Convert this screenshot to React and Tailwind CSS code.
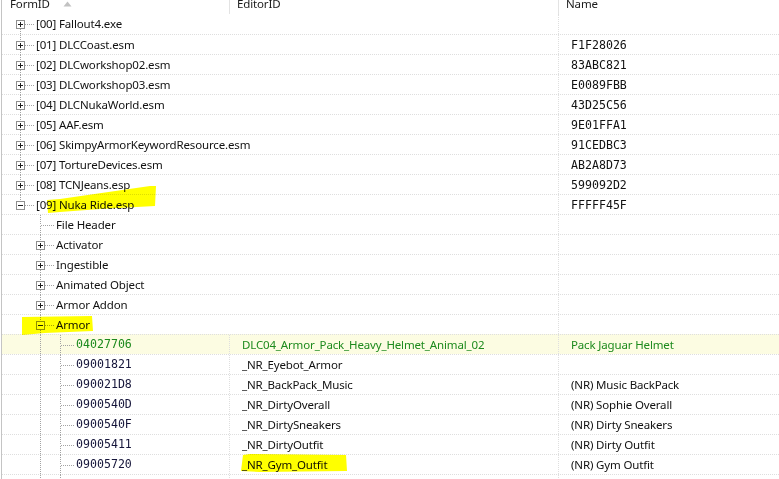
import React from "react";

const roots = [
  ["[00] Fallout4.exe", ""],
  ["[01] DLCCoast.esm", "F1F28026"],
  ["[02] DLCworkshop02.esm", "83ABC821"],
  ["[03] DLCworkshop03.esm", "E0089FBB"],
  ["[04] DLCNukaWorld.esm", "43D25C56"],
  ["[05] AAF.esm", "9E01FFA1"],
  ["[06] SkimpyArmorKeywordResource.esm", "91CEDBC3"],
  ["[07] TortureDevices.esm", "AB2A8D73"],
  ["[08] TCNJeans.esp", "599092D2"],
];

const groups = [
  ["File Header", null],
  ["Activator", "plus"],
  ["Ingestible", "plus"],
  ["Animated Object", "plus"],
  ["Armor Addon", "plus"],
];

const records = [
  ["04027706", "DLC04_Armor_Pack_Heavy_Helmet_Animal_02", "Pack Jaguar Helmet", true],
  ["09001821", "_NR_Eyebot_Armor", ""],
  ["090021D8", "_NR_BackPack_Music", "(NR) Music BackPack"],
  ["0900540D", "_NR_DirtyOverall", "(NR) Sophie Overall"],
  ["0900540F", "_NR_DirtySneakers", "(NR) Dirty Sneakers"],
  ["09005411", "_NR_DirtyOutfit", "(NR) Dirty Outfit"],
  ["09005720", "_NR_Gym_Outfit", "(NR) Gym Outfit"],
];

const dot = "#a3a3a3";

// indent column: a vertical dotted line when the ancestor has more siblings
function Indent({ line }) {
  return (
    <svg width="20" height="20" className="shrink-0">
      {line && <line x1="10.5" y1="0" x2="10.5" y2="20" stroke={dot} strokeDasharray="1 1" />}
    </svg>
  );
}

// node glyph: tree lines plus the expand box
function Node({ box, top = true, bottom = true }) {
  return (
    <svg width="26" height="20" className="shrink-0">
      {top && <line x1="10.5" y1="0" x2="10.5" y2="10" stroke={dot} strokeDasharray="1 1" />}
      {bottom && <line x1="10.5" y1="11" x2="10.5" y2="20" stroke={dot} strokeDasharray="1 1" />}
      <line x1={box ? 15 : 11} y1="10.5" x2="24" y2="10.5" stroke={dot} strokeDasharray="1 1" />
      {box && (
        <g>
          <rect x="6.5" y="6.5" width="8" height="8" fill="white" stroke="#8f8f8f" />
          <line x1="8" y1="10.5" x2="13" y2="10.5" stroke="#202020" />
          {box === "plus" && <line x1="10.5" y1="8" x2="10.5" y2="13" stroke="#202020" />}
        </g>
      )}
    </svg>
  );
}

function Row({ first, hl, children }) {
  return (
    <div
      className={
        "flex h-[20px] items-center " +
        (first ? "" : "border-t border-dotted border-[#dedede] ") +
        (hl ? "bg-[#fcfce2]" : "")
      }
    >
      {children}
    </div>
  );
}

export default function App() {
  const mono = "font-['DejaVu_Sans_Mono',monospace] text-[11.6px] tracking-normal";
  return (
    <div className="relative h-[479px] w-[779px] overflow-hidden bg-white font-['Noto_Sans',sans-serif] text-[11.5px] tracking-[-0.15px] text-[#111]">
      <div className="h-full border-l border-[#c4c4c4] ml-[1px]">
        {/* header, scrolled so its top is cut off */}
        <div className="flex h-[14px] overflow-hidden leading-[20px] text-[#1a1a1a]">
          <div className="relative -mt-[6px] flex w-[227px] pl-[8px]">
            FormID
            <svg width="9" height="6" className="ml-[13px] mt-[7px]">
              <path d="M0.5 5.5 L4.5 0.5 L8.5 5.5 Z" fill="#c2c2c2" />
            </svg>
          </div>
          <div className="-mt-[6px] w-[329px] border-l border-[#e3e3e3] pl-[7px]">EditorID</div>
          <div className="-mt-[6px] flex-1 border-l border-[#e3e3e3] pl-[7px]">Name</div>
        </div>

        {roots.map(([name, hash], i) => (
          <Row key={name} first={i === 0}>
            <div className="flex w-[556px] items-center pl-[8px]">
              <Node box="plus" top={i !== 0} />
              <span>{name}</span>
            </div>
            <div className={"h-full flex-1 border-l border-dotted border-[#dedede] pl-[12px] leading-[20px] " + mono}>{hash}</div>
          </Row>
        ))}

        <Row>
          <div className="flex w-[556px] items-center pl-[8px]">
            <Node box="minus" bottom={false} />
            <span>[09] Nuka Ride.esp</span>
          </div>
          <div className={"h-full flex-1 border-l border-dotted border-[#dedede] pl-[12px] leading-[20px] " + mono}>FFFFF45F</div>
        </Row>

        {groups.map(([name, box]) => (
          <Row key={name}>
            <div className="flex w-[556px] items-center pl-[8px]">
              <Indent />
              <Node box={box} />
              <span>{name}</span>
            </div>
            <div className="h-full flex-1 border-l border-dotted border-[#dedede]" />
          </Row>
        ))}

        <Row>
          <div className="flex w-[556px] items-center pl-[8px]">
            <Indent />
            <Node box="minus" />
            <span>Armor</span>
          </div>
          <div className="h-full flex-1 border-l border-dotted border-[#dedede]" />
        </Row>

        {records.map(([id, edid, full, hl]) => (
          <Row key={id} hl={hl}>
            <div className={"flex w-[227px] items-center pl-[8px] " + (hl ? "text-[#1d8a1d]" : "text-[#15153a]")}>
              <Indent />
              <Indent line />
              <Node />
              <span className={mono}>{id}</span>
            </div>
            <div className={"h-full w-[329px] border-l border-dotted border-[#dedede] pl-[12px] leading-[20px] " + (hl ? "text-[#1d8a1d]" : "")}>
              {edid}
            </div>
            <div className={"h-full flex-1 border-l border-dotted border-[#dedede] pl-[12px] leading-[20px] " + (hl ? "text-[#1d8a1d]" : "")}>
              {full}
            </div>
          </Row>
        ))}

        <Row>
          <div className="flex w-[227px] items-center pl-[8px]">
            <Indent />
            <Indent line />
            <Node />
          </div>
          <div className="h-full w-[329px] border-l border-dotted border-[#dedede]" />
          <div className="h-full flex-1 border-l border-dotted border-[#dedede]" />
        </Row>
      </div>

      {/* highlighter marks drawn over the screenshot */}
      <svg className="pointer-events-none absolute left-0 top-0 mix-blend-multiply" width="779" height="479">
        <path d="M47 200 L60 199 L150 186 L156 186 L155 206 L100 209 L60 212 L48 213 Z" fill="#ffff00" />
        <path d="M22 317 L92 316 L93 331 L45 333 L22 335 Z" fill="#ffff00" />
        <path d="M243 455 L250 454 L346 455 L347 471 L260 472 L241 471 Z" fill="#ffff00" />
      </svg>
    </div>
  );
}
